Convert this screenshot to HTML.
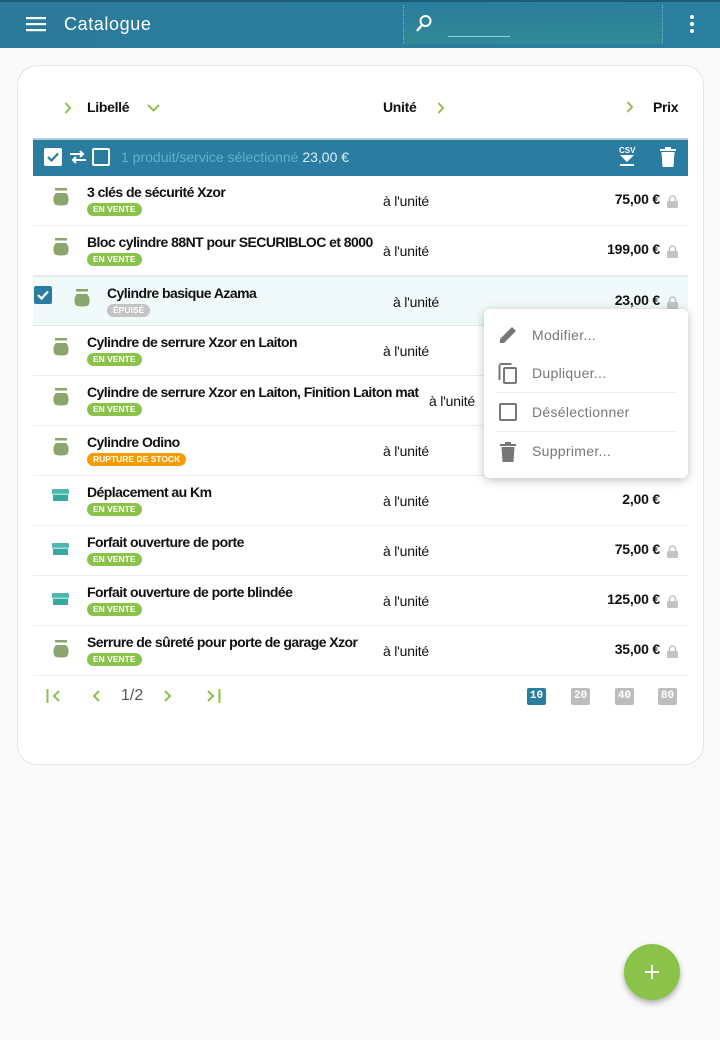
<!DOCTYPE html>
<html><head><meta charset="utf-8"><style>
*{margin:0;padding:0;box-sizing:border-box}
body{width:720px;height:1040px;background:#fafafa;font-family:"Liberation Sans",sans-serif;position:relative;overflow:hidden;color:#111}
.abs{position:absolute}
.top{left:0;top:0;width:720px;height:48px;background:linear-gradient(90deg,#2b7a9a,#2a7f9f);border-top:2px solid #1d5a78}
.card{left:17px;top:65px;width:687px;height:700px;background:#fff;border:1px solid #e4e4e4;border-radius:20px}
.hd{font-size:14px;font-weight:bold;top:99px;letter-spacing:-.3px}
.sel{left:33px;top:138px;width:655px;height:38px;background:#2a7da0;border-top:2px solid #b9cfd9}
.row{left:33px;width:655px;height:50px;border-bottom:1px solid #eee}
.nm{font-size:14px;font-weight:bold;position:absolute;top:8px;white-space:nowrap;letter-spacing:-.55px}
.bd{position:absolute;top:27px;height:13px;border-radius:7px;background:#8bc34a;color:#fff;font-size:8.5px;font-weight:bold;line-height:13px;padding:0 6px}
.un{position:absolute;top:17px;font-size:14px;letter-spacing:-.2px}
.pr{position:absolute;top:15px;right:28px;font-size:14px;font-weight:bold;letter-spacing:-.2px}
.lk{position:absolute;top:19px;right:10px;width:11px;height:13px}
.menu{left:484px;top:309px;width:204px;height:169px;background:#fff;border-radius:6px;box-shadow:0 2px 10px rgba(0,0,0,.25)}
.mi{position:absolute;left:48px;font-size:14px;color:#777;letter-spacing:.3px}
.ps{top:688px;width:19px;height:17px;border-radius:2px;color:#fff;font-size:11px;font-weight:bold;text-align:center;line-height:17px;font-family:"Liberation Mono",monospace}
</style></head><body>
<div class="abs top"></div>
<svg class="abs" style="left:26px;top:16px" width="20" height="16"><rect y="1" width="20" height="2.2" fill="#fff"/><rect y="7" width="20" height="2.2" fill="#fff"/><rect y="13" width="20" height="2.2" fill="#fff"/></svg>
<div class="abs" style="left:64px;top:14px;color:#fff;font-size:18px;letter-spacing:.6px">Catalogue</div>
<div class="abs" style="left:403px;top:5px;width:260px;height:39px;border-left:1px dotted #7fb7c7;border-right:1px dotted #7fb7c7;background:linear-gradient(180deg,rgba(0,0,0,0),rgba(60,160,130,.35))"></div>
<svg class="abs" style="left:414px;top:13px" width="20" height="20"><circle cx="11.5" cy="8" r="5" stroke="#fff" stroke-width="2" fill="none"/><line x1="8" y1="12" x2="3" y2="18" stroke="#fff" stroke-width="2.2"/></svg>
<div class="abs" style="left:448px;top:36px;width:62px;height:1px;background:#8fd0de"></div>
<svg class="abs" style="left:688px;top:14px" width="8" height="20"><circle cx="4" cy="3" r="2" fill="#fff"/><circle cx="4" cy="10" r="2" fill="#fff"/><circle cx="4" cy="17" r="2" fill="#fff"/></svg>

<div class="abs card"></div>
<svg class="abs" style="left:64px;top:102px" width="8" height="12"><path d="M1.5 1l4.5 5-4.5 5" stroke="#8bc34a" stroke-width="2" fill="none"/></svg>
<div class="abs hd" style="left:87px">Libellé</div>
<svg class="abs" style="left:147px;top:104px" width="13" height="8"><path d="M1 1l5.5 5.5L12 1" stroke="#8bc34a" stroke-width="2" fill="none"/></svg>
<div class="abs hd" style="left:383px">Unité</div>
<svg class="abs" style="left:437px;top:102px" width="8" height="12"><path d="M1.5 1l4.5 5-4.5 5" stroke="#8bc34a" stroke-width="2" fill="none"/></svg>
<svg class="abs" style="left:626px;top:101px" width="8" height="12"><path d="M1.5 1l4.5 5-4.5 5" stroke="#8bc34a" stroke-width="2" fill="none"/></svg>
<div class="abs hd" style="left:653px">Prix</div>

<div class="abs sel"></div>
<div class="abs" style="left:44px;top:148px;width:18px;height:18px;background:#fff;border-radius:2px"></div>
<svg class="abs" style="left:44px;top:148px" width="18" height="18"><path d="M4 9l3.5 3.5L14 5.5" stroke="#2a7da0" stroke-width="2.2" fill="none"/></svg>
<svg class="abs" style="left:68px;top:149px" width="20" height="16"><path d="M2 5h13M12 2l3 3-3 3M18 11H5M8 8l-3 3 3 3" stroke="#fff" stroke-width="2" fill="none"/></svg>
<div class="abs" style="left:92px;top:148px;width:18px;height:18px;border:2px solid #fff;border-radius:2px"></div>
<div class="abs" style="left:121px;top:149px;font-size:14px;color:#62b0cc">1 produit/service sélectionné <b style="color:#d9eef5;font-weight:normal">23,00 €</b></div>
<div class="abs" style="left:619px;top:146px;font-size:8px;color:#fff;font-weight:bold">CSV</div>
<svg class="abs" style="left:618px;top:155px" width="18" height="12"><path d="M2 0h14L9 7z" fill="#fff"/><rect x="2" y="9" width="14" height="2" fill="#fff"/></svg>
<svg class="abs" style="left:660px;top:147px" width="16" height="20"><rect x="0" y="2" width="16" height="2" fill="#fff"/><rect x="5" y="0" width="6" height="3" fill="#fff"/><path d="M1.5 5h13l-1 15h-11z" fill="#fff"/></svg>

<svg width="0" height="0" style="position:absolute"><defs>
<g id="pot"><rect x="2" y="0" width="12" height="2.5" fill="#8aa66c"/><path d="M3 5h10c2.5 2.5 3.5 6 1.5 11-1 2-12 2-13 0-2-5-1-8.5 1.5-11z" fill="#8aa66c"/></g>
<g id="box"><rect x="0" y="0" width="17" height="5" rx="1" fill="#4db6b0"/><rect x="1" y="6" width="15" height="6" fill="#3aa8a2"/><rect x="0" y="4.5" width="17" height="1.5" fill="#9fe0db"/></g>
<g id="lock"><path d="M2.5 6V4a3 3 0 016 0v2" stroke="#c4c4c4" stroke-width="1.6" fill="none"/><rect x="0" y="6" width="11" height="7" rx="1" fill="#c4c4c4"/></g>
</defs></svg>

<div class="abs row" style="top:176px"><svg class="abs" style="left:20px;top:12px" width="16" height="20"><use href="#pot"/></svg><div class="nm" style="left:54px">3 clés de sécurité Xzor</div><div class="bd" style="left:54px">EN VENTE</div><div class="un" style="left:350px">à l'unité</div><div class="pr">75,00 €</div><svg class="lk"><use href="#lock"/></svg></div>
<div class="abs row" style="top:226px"><svg class="abs" style="left:20px;top:12px" width="16" height="20"><use href="#pot"/></svg><div class="nm" style="left:54px">Bloc cylindre 88NT pour SECURIBLOC et 8000</div><div class="bd" style="left:54px">EN VENTE</div><div class="un" style="left:350px">à l'unité</div><div class="pr">199,00 €</div><svg class="lk"><use href="#lock"/></svg></div>
<div class="abs row" style="top:276px;background:#f1fafa;border-top:1px dotted #bde3ea;border-bottom:1px dotted #bde3ea"><div class="abs" style="left:1px;top:9px;width:18px;height:18px;background:#2a7da0;border-radius:2px"></div><svg class="abs" style="left:1px;top:9px" width="18" height="18"><path d="M4 9l3.5 3.5L14 5.5" stroke="#fff" stroke-width="2.2" fill="none"/></svg><svg class="abs" style="left:41px;top:12px" width="16" height="20"><use href="#pot"/></svg><div class="nm" style="left:74px">Cylindre basique Azama</div><div class="bd" style="left:74px;background:#c4c4c4">ÉPUISÉ</div><div class="un" style="left:360px">à l'unité</div><div class="pr">23,00 €</div><svg class="lk"><use href="#lock"/></svg></div>
<div class="abs row" style="top:326px"><svg class="abs" style="left:20px;top:12px" width="16" height="20"><use href="#pot"/></svg><div class="nm" style="left:54px">Cylindre de serrure Xzor en Laiton</div><div class="bd" style="left:54px">EN VENTE</div><div class="un" style="left:350px">à l'unité</div></div>
<div class="abs row" style="top:376px"><svg class="abs" style="left:20px;top:12px" width="16" height="20"><use href="#pot"/></svg><div class="nm" style="left:54px">Cylindre de serrure Xzor en Laiton, Finition Laiton mat</div><div class="bd" style="left:54px">EN VENTE</div><div class="un" style="left:396px">à l'unité</div></div>
<div class="abs row" style="top:426px"><svg class="abs" style="left:20px;top:12px" width="16" height="20"><use href="#pot"/></svg><div class="nm" style="left:54px">Cylindre Odino</div><div class="bd" style="left:54px;background:#f59c00">RUPTURE DE STOCK</div><div class="un" style="left:350px">à l'unité</div></div>
<div class="abs row" style="top:476px"><svg class="abs" style="left:19px;top:13px" width="17" height="12"><use href="#box"/></svg><div class="nm" style="left:54px">Déplacement au Km</div><div class="bd" style="left:54px">EN VENTE</div><div class="un" style="left:350px">à l'unité</div><div class="pr">2,00 €</div></div>
<div class="abs row" style="top:526px"><svg class="abs" style="left:19px;top:17px" width="17" height="12"><use href="#box"/></svg><div class="nm" style="left:54px">Forfait ouverture de porte</div><div class="bd" style="left:54px">EN VENTE</div><div class="un" style="left:350px">à l'unité</div><div class="pr">75,00 €</div><svg class="lk"><use href="#lock"/></svg></div>
<div class="abs row" style="top:576px"><svg class="abs" style="left:19px;top:17px" width="17" height="12"><use href="#box"/></svg><div class="nm" style="left:54px">Forfait ouverture de porte blindée</div><div class="bd" style="left:54px">EN VENTE</div><div class="un" style="left:350px">à l'unité</div><div class="pr">125,00 €</div><svg class="lk"><use href="#lock"/></svg></div>
<div class="abs row" style="top:626px"><svg class="abs" style="left:20px;top:14px" width="16" height="20"><use href="#pot"/></svg><div class="nm" style="left:54px">Serrure de sûreté pour porte de garage Xzor</div><div class="bd" style="left:54px">EN VENTE</div><div class="un" style="left:350px">à l'unité</div><div class="pr">35,00 €</div><svg class="lk"><use href="#lock"/></svg></div>

<div class="abs menu">
<svg class="abs" style="left:14px;top:16px" width="20" height="20"><path d="M2 18v-4L14 2l4 4L6 18z" fill="#777"/></svg>
<div class="mi" style="top:18px">Modifier...</div>
<svg class="abs" style="left:14px;top:54px" width="20" height="22"><path d="M1.5 2v15" stroke="#777" stroke-width="2"/><path d="M1.5 1h12" stroke="#777" stroke-width="2"/><rect x="6" y="5" width="12" height="15" rx="1" stroke="#777" stroke-width="2" fill="none"/></svg>
<div class="mi" style="top:56px">Dupliquer...</div>
<div class="abs" style="left:12px;top:83px;width:180px;height:1px;background:#eee"></div>
<div class="abs" style="left:15px;top:94px;width:18px;height:18px;border:2px solid #777;border-radius:2px"></div>
<div class="mi" style="top:95px">Désélectionner</div>
<div class="abs" style="left:12px;top:122px;width:180px;height:1px;background:#eee"></div>
<svg class="abs" style="left:16px;top:133px" width="16" height="20"><rect x="0" y="2" width="16" height="2" fill="#777"/><rect x="5" y="0" width="6" height="3" fill="#777"/><path d="M1.5 5h13l-1 15h-11z" fill="#777"/></svg>
<div class="mi" style="top:134px">Supprimer...</div>
</div>

<svg class="abs" style="left:46px;top:689px" width="16" height="14"><path d="M1.5 0v14" stroke="#8bc34a" stroke-width="2"/><path d="M13 2L8 7l5 5" stroke="#8bc34a" stroke-width="2" fill="none"/></svg>
<svg class="abs" style="left:90px;top:689px" width="12" height="14"><path d="M9 2L4 7l5 5" stroke="#8bc34a" stroke-width="2" fill="none"/></svg>
<div class="abs" style="left:121px;top:687px;font-size:16px;color:#555">1/2</div>
<svg class="abs" style="left:162px;top:689px" width="12" height="14"><path d="M3 2l5 5-5 5" stroke="#8bc34a" stroke-width="2" fill="none"/></svg>
<svg class="abs" style="left:205px;top:689px" width="16" height="14"><path d="M3 2l5 5-5 5" stroke="#8bc34a" stroke-width="2" fill="none"/><path d="M14.5 0v14" stroke="#8bc34a" stroke-width="2"/></svg>
<div class="abs ps" style="left:527px;background:#2a7da0">10</div>
<div class="abs ps" style="left:571px;background:#bdbdbd">20</div>
<div class="abs ps" style="left:615px;background:#bdbdbd">40</div>
<div class="abs ps" style="left:658px;background:#bdbdbd">80</div>

<div class="abs" style="left:624px;top:944px;width:56px;height:56px;border-radius:50%;background:#8bc34a;box-shadow:0 3px 6px rgba(0,0,0,.3)"></div>
<svg class="abs" style="left:643px;top:963px" width="18" height="18"><path d="M9 2v14M2 9h14" stroke="#fff" stroke-width="2"/></svg>
</body></html>
